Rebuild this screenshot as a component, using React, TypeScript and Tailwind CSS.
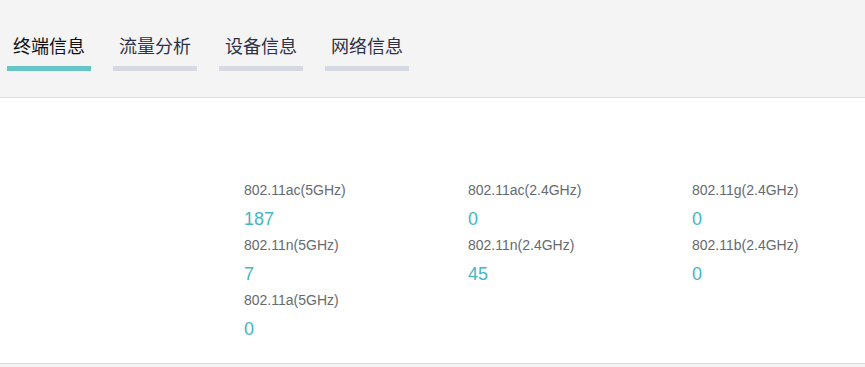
import React from "react";

const tabs = ["终端信息", "流量分析", "设备信息", "网络信息"];

const items = [
  { label: "802.11ac(5GHz)", value: "187" },
  { label: "802.11ac(2.4GHz)", value: "0" },
  { label: "802.11g(2.4GHz)", value: "0" },
  { label: "802.11n(5GHz)", value: "7" },
  { label: "802.11n(2.4GHz)", value: "45" },
  { label: "802.11b(2.4GHz)", value: "0" },
  { label: "802.11a(5GHz)", value: "0" },
];

export default function App() {
  return (
    <div
      className="w-[865px] h-[367px] bg-[#f4f4f4] overflow-hidden"
      style={{ fontFamily: '"Liberation Sans", "Noto Sans CJK SC", Arial, sans-serif' }}
    >
      <div className="h-[98px] border-b border-[#dcdcdc] bg-[#f4f4f4] pt-[33px] pl-[7px] flex gap-[22px]">
        {tabs.map((t, i) => (
          <div key={t} className="flex flex-col items-center w-[84px]">
            <div
              className={
                "h-[24px] leading-[24px] text-[18px] " +
                (i === 0 ? "text-[#111111]" : "text-[#2f3147]")
              }
              style={{ fontFamily: '"Noto Sans CJK SC", sans-serif' }}
            >
              {t}
            </div>
            <div
              className={
                "mt-[9px] h-[5px] w-[84px] " +
                (i === 0 ? "bg-[#69c5c5]" : "bg-[#d5d9e1]")
              }
            />
          </div>
        ))}
      </div>
      <div className="h-[266px] bg-white border-b border-[#dcdde3] pt-[82px] pl-[244px]">
        <div className="grid grid-cols-[224px_224px_224px] gap-y-[4px]">
          {items.map((it) => (
            <div key={it.label} className="flex flex-col">
              <div className="h-[20px] leading-[20px] text-[14px] text-[#666a70]">{it.label}</div>
              <div className="mt-[7px] h-[24px] leading-[24px] text-[18px] text-[#45b6c4]">{it.value}</div>
            </div>
          ))}
        </div>
      </div>
    </div>
  );
}
